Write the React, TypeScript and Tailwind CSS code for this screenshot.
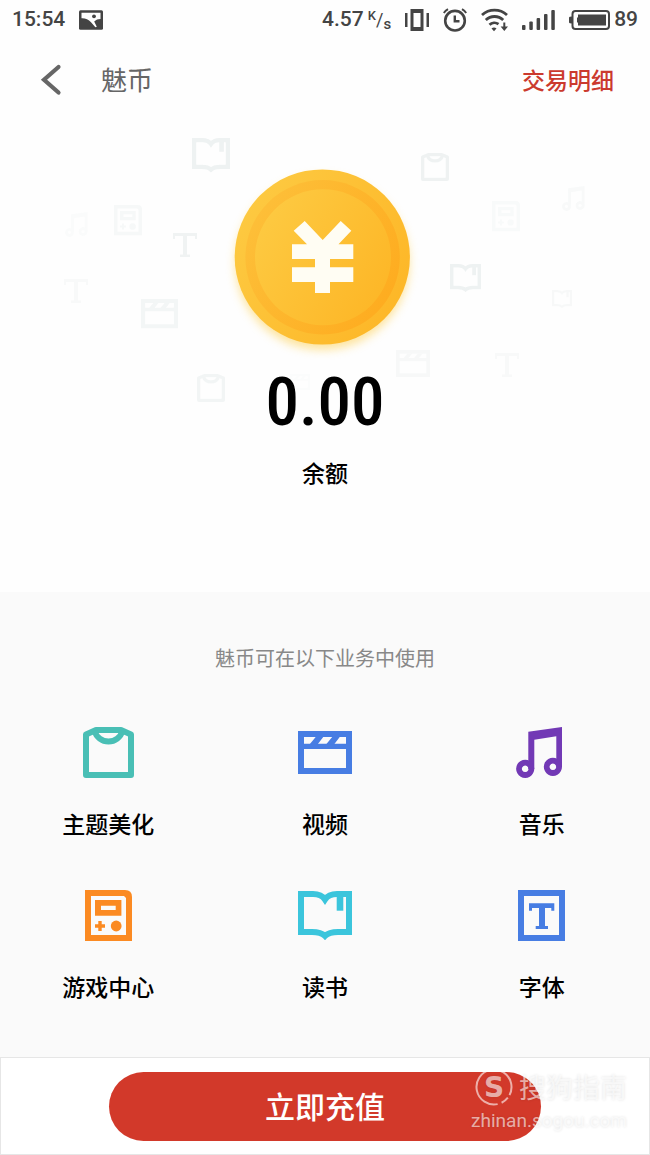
import React from "react";

type Glyph = { w: number; h: number; art: React.ReactNode };

const shirt: Glyph = {
  w: 51,
  h: 51,
  art: (
    <g fill="none" stroke="currentColor" strokeWidth="6" strokeLinejoin="round">
      <path d="M3 48V7.5L13 3H38L48 7.5V48Z" />
      <path d="M11.5 4A14.6 14.6 0 0 0 39.5 4" />
    </g>
  ),
};

const clapper: Glyph = {
  w: 54,
  h: 43,
  art: (
    <g fill="currentColor">
      <path fillRule="evenodd" d="M0 0H54V43H0ZM6 6V12.7H48V6ZM6 18V37H48V18Z" />
      <path d="M18.5 5H26L19.5 13.5H11.5ZM35 5H42.5L36 13.5H28Z" />
    </g>
  ),
};

const music: Glyph = {
  w: 51,
  h: 51,
  art: (
    <g fill="currentColor">
      <path d="M12.3 4.7L46 0V40H40.3V9.3L18.3 12.8V42H12.3Z" />
      <path
        fillRule="evenodd"
        d="M9.2 32.7a9.1 9.1 0 1 0 .01 0ZM9.2 38.5a3.3 3.3 0 1 1-.01 0ZM36.9 30.7a9.1 9.1 0 1 0 .01 0ZM36.9 36.5a3.3 3.3 0 1 1-.01 0Z"
      />
    </g>
  ),
};

const gamepad: Glyph = {
  w: 47,
  h: 51,
  art: (
    <g fill="currentColor">
      <path fillRule="evenodd" d="M0 0H40Q47 0 47 7V51H0ZM6 6V45H41V8L39 6Z" />
      <path fillRule="evenodd" d="M10 10H36.4V25.7H10ZM16 15.7V20H30.7V15.7Z" />
      <path d="M13.3 31H16.7V34.3H20V37.7H16.7V41H13.3V37.7H10V34.3H13.3Z" />
      <circle cx="31.2" cy="36" r="5.4" />
    </g>
  ),
};

const book: Glyph = {
  w: 54,
  h: 49,
  art: (
    <g>
      <path
        fill="none"
        stroke="currentColor"
        strokeWidth="6"
        d="M3 3H15C21 3 25 5.5 27 8.5C29 5.5 33 3 39 3H51V41H40C34 41 29.5 42.5 27 45C24.5 42.5 20 41 14 41H3Z"
      />
      <path fill="currentColor" d="M38.7 3H45.3V19.7H38.7Z" />
    </g>
  ),
};

const typeface: Glyph = {
  w: 47,
  h: 51,
  art: (
    <g fill="currentColor">
      <path fillRule="evenodd" d="M0 0H47V51H0ZM6 6V45H41V6Z" />
      <path d="M11 13.3H36.3V20.7H33.3V18H27V36H30V39H17.7V36H21V18H14V20.7H11Z" />
    </g>
  ),
};

const letter: Glyph = {
  w: 24,
  h: 24,
  art: <path fill="currentColor" d="M0 0H24V6H22V3H14V21.5H17V24H7V21.5H10V3H2V6H0Z" />,
};

const services = [
  { name: "主题美化", glyph: shirt, color: "text-[#49bfb5]" },
  { name: "视频", glyph: clapper, color: "text-[#477de3]" },
  { name: "音乐", glyph: music, color: "text-[#7239b5]" },
  { name: "游戏中心", glyph: gamepad, color: "text-[#fb8a22]" },
  { name: "读书", glyph: book, color: "text-[#3bc5dc]" },
  { name: "字体", glyph: typeface, color: "text-[#477de3]" },
];

const floating = [
  { glyph: book, x: 192, y: 18, w: 38, o: 0.9 },
  { glyph: gamepad, x: 114, y: 85, w: 28, o: 0.45 },
  { glyph: music, x: 65, y: 92, w: 25, o: 0.22 },
  { glyph: letter, x: 173, y: 113, w: 24, o: 0.8 },
  { glyph: letter, x: 64, y: 159, w: 24, o: 0.35 },
  { glyph: clapper, x: 141, y: 179, w: 37, o: 0.6 },
  { glyph: shirt, x: 197, y: 254, w: 28, o: 0.65 },
  { glyph: shirt, x: 421, y: 33, w: 28, o: 0.85 },
  { glyph: gamepad, x: 492, y: 81, w: 28, o: 0.3 },
  { glyph: music, x: 562, y: 66, w: 25, o: 0.35 },
  { glyph: book, x: 450, y: 144, w: 31, o: 0.9 },
  { glyph: book, x: 552, y: 170, w: 20, o: 0.4 },
  { glyph: clapper, x: 396, y: 230, w: 34, o: 0.4 },
  { glyph: letter, x: 495, y: 233, w: 24, o: 0.35 },
  { glyph: clapper, x: 290, y: 254, w: 20, o: 0.15 },
];

function StatusBar() {
  return (
    <div className="flex h-10 items-center justify-between px-3 font-['Roboto',sans-serif] text-[21px] font-medium text-[#444]">
      <div className="flex items-center gap-[14px]">
        <span>15:54</span>
        <svg width="24" height="20" viewBox="0 0 24 20" aria-hidden="true">
          <rect y="0.3" width="24" height="19.4" rx="1.5" fill="currentColor" />
          <path
            fill="#fff"
            d="M2.5 2.8H21.5V9C19 9 17 9.8 15.2 11.5L17.8 16.8L16.4 17.2L12 12.2C9.5 9 6 8 2.5 8.2Z"
          />
          <circle cx="15" cy="6.3" r="1.9" fill="currentColor" />
        </svg>
      </div>
      <div className="flex items-center gap-[14px]">
        <div className="flex items-center gap-1">
          <span>4.57</span>
          <span className="flex items-center leading-5">
            <span className="pb-2 text-[13px]">K</span>
            <span className="text-lg font-normal">/</span>
            <span className="pt-2 text-[15px]">s</span>
          </span>
        </div>
        <svg width="24" height="22" viewBox="0 0 24 22" fill="currentColor" aria-hidden="true">
          <path fillRule="evenodd" d="M5.5 0H18.5V22H5.5ZM8.5 4V18H15.5V4Z" />
          <path d="M0 4H2.5V18H0ZM21.5 4H24V18H21.5Z" />
        </svg>
        <svg width="24" height="24" viewBox="0 0 24 24" fill="none" stroke="currentColor" aria-hidden="true">
          <circle cx="12" cy="12.7" r="9.8" strokeWidth="2.6" />
          <path strokeWidth="2.4" d="M11.8 7.5V13.2H16.5" />
          <path strokeWidth="2" d="M0.8 5A13 13 0 0 1 5 1.2M19 1.2A13 13 0 0 1 23.2 5" />
        </svg>
        <svg width="27" height="24" viewBox="0 0 27 24" fill="none" stroke="currentColor" aria-hidden="true">
          <path strokeWidth="2.8" d="M1 7A18.5 18.5 0 0 1 26 7M4.8 12A12.5 12.5 0 0 1 22.2 12M8.5 16.8A7 7 0 0 1 17.5 16.2" />
          <path fill="currentColor" stroke="none" d="M10.5 20.5Q13 18.3 15.5 20.5L13 23.3Z" />
          <path fill="currentColor" stroke="none" d="M22.3 14.5H24.3V18.5H27L23.3 23L19.6 18.5H22.3Z" />
        </svg>
        <svg width="33" height="22" viewBox="0 0 33 22" fill="currentColor" aria-hidden="true">
          <rect x="0" y="16" width="3.5" height="5" rx="1" />
          <rect x="7.3" y="12.5" width="3.5" height="8.5" rx="1" />
          <rect x="14.6" y="9" width="3.5" height="12" rx="1" />
          <rect x="22" y="5" width="3.5" height="16" rx="1" />
          <rect x="29.3" y="1" width="3.5" height="20" rx="1" />
        </svg>
        <div className="flex items-center gap-1">
          <svg width="41" height="20" viewBox="0 0 41 20" aria-hidden="true">
            <rect x="3.5" y="1" width="36.5" height="18" rx="3" fill="none" stroke="currentColor" strokeWidth="2" />
            <path fill="currentColor" d="M9 4.5H37V15.5H9V12.5H8V7.5H9ZM0 7.5Q0 6.5 3 6.5V13.5Q0 13.5 0 12.5Z" />
          </svg>
          <span>89</span>
        </div>
      </div>
    </div>
  );
}

function Coin() {
  return (
    <svg className="relative" width="200" height="200" viewBox="0 0 200 200" aria-hidden="true">
      <defs>
        <linearGradient id="face" x1="0" y1="0.2" x2="1" y2="0.8">
          <stop offset="0" stopColor="#fdca42" />
          <stop offset="1" stopColor="#fdb626" />
        </linearGradient>
        <linearGradient id="ring" x1="0" y1="0.2" x2="1" y2="0.8">
          <stop offset="0" stopColor="#fdc03a" />
          <stop offset="1" stopColor="#feab1e" />
        </linearGradient>
        <filter id="glow" x="-20%" y="-20%" width="140%" height="140%">
          <feGaussianBlur stdDeviation="5" />
        </filter>
      </defs>
      <circle cx="97.3" cy="103" r="87" fill="#fdd35f" opacity="0.6" filter="url(#glow)" />
      <circle cx="97.3" cy="97" r="87.6" fill="url(#face)" />
      <circle cx="97.6" cy="97.3" r="77.2" fill="url(#ring)" />
      <circle cx="98" cy="97.3" r="68" fill="url(#face)" />
      <path
        fill="#fffdf3"
        d="M79.7 61L97.7 80L115.7 61L126.3 70.7L113.5 84.3H128.3V99H105V107.3H128.3V122H105V133H90V122H67V107.3H90V99H67V84.3H82L68.7 70.7Z"
      />
    </svg>
  );
}

export default function App() {
  return (
    <div className="flex min-h-screen flex-col bg-[#fefefe] font-['Noto_Sans_CJK_SC',sans-serif] text-black">
      <StatusBar />
      <header className="flex h-20 items-center pr-9 pl-10">
        <button type="button" aria-label="返回" className="flex w-[61px] items-center text-[#666]">
          <svg width="24" height="32" viewBox="0 0 24 32" fill="none" stroke="currentColor" strokeWidth="4.2" strokeLinecap="round" aria-hidden="true">
            <path d="M18.5 3L4 15.8L18.5 28.5" />
          </svg>
        </button>
        <h1 className="flex-1 pb-[2px] text-[26px] leading-9 text-[#666]">魅币</h1>
        <a href="#details" className="pb-[2px] text-[23px] leading-9 font-medium text-[#cb3a2e]">
          交易明细
        </a>
      </header>

      <main className="flex flex-1 flex-col">
        <section className="relative flex flex-col items-center overflow-hidden pt-10 pb-[103px]">
          <svg
            className="absolute top-0 left-1/2 -translate-x-1/2 text-[#edf1f1]"
            width="650"
            height="300"
            viewBox="0 0 650 300"
            aria-hidden="true"
          >
            {floating.map(({ glyph, x, y, w, o }, i) => (
              <svg key={i} x={x} y={y} width={w} height={(w * glyph.h) / glyph.w} viewBox={`0 0 ${glyph.w} ${glyph.h}`} opacity={o}>
                {glyph.art}
              </svg>
            ))}
          </svg>
          <Coin />
          <p className="relative font-['Roboto_Condensed','Roboto',sans-serif] text-[67px] leading-[84px] font-medium">0.00</p>
          <p className="mt-[11px] text-[23px] leading-[34px] font-medium">余额</p>
        </section>

        <section className="flex-1 bg-[#fafafa] pt-12 pb-[54px]">
          <h2 className="text-center text-[20px] leading-9 text-[#888]">魅币可在以下业务中使用</h2>
          <div className="mt-[51px] grid grid-cols-3 gap-y-[53px]">
            {services.map(({ name, glyph, color }) => (
              <a key={name} href={`#${name}`} className="flex flex-col items-center gap-[31px]">
                <span className={`flex h-[51px] items-center ${color}`}>
                  <svg width={glyph.w} height={glyph.h} viewBox={`0 0 ${glyph.w} ${glyph.h}`} aria-hidden="true">
                    {glyph.art}
                  </svg>
                </span>
                <span className="text-[23px] leading-7 font-medium">{name}</span>
              </a>
            ))}
          </div>
        </section>
      </main>

      <footer className="relative flex justify-center border border-[#e6e6e6] bg-white pt-[14px] pb-[13px]">
        <button type="button" className="h-[69px] w-2/3 rounded-full bg-[#d2392a] pb-1 text-[30px] leading-10 font-medium text-white">
          立即充值
        </button>
        <div className="pointer-events-none absolute top-[9px] right-[22px] flex flex-col items-end text-white/60 [text-shadow:0_0_3px_rgba(0,0,0,0.12)]">
          <div className="flex items-center gap-[5px]">
            <svg width="40" height="40" viewBox="0 0 40 40" aria-hidden="true">
              <circle cx="20" cy="20" r="17.5" fill="none" stroke="currentColor" strokeWidth="2" strokeDasharray="94 3 8 5" transform="rotate(78 20 20)" />
              <text x="20" y="30" textAnchor="middle" fontSize="28" fontWeight="700" fontFamily="DejaVu Sans, sans-serif" fill="currentColor">
                S
              </text>
            </svg>
            <span className="text-[27px] leading-10">搜狗指南</span>
          </div>
          <span className="font-['Roboto',sans-serif] text-[19px] leading-7">zhinan.sogou.com</span>
        </div>
      </footer>
    </div>
  );
}
